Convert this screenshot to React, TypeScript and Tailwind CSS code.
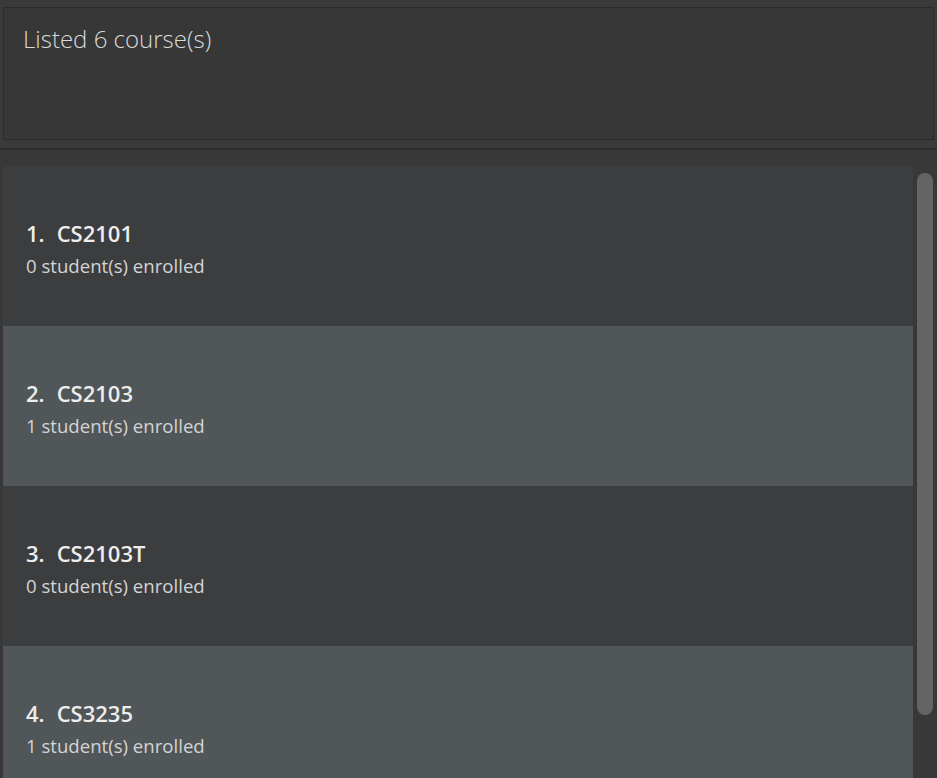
const courses = [
  { code: 'CS2101', students: 0 },
  { code: 'CS2103', students: 1 },
  { code: 'CS2103T', students: 0 },
  { code: 'CS3235', students: 1 },
]

function CourseCard({ index, code, students }: { index: number; code: string; students: number }) {
  const even = index % 2 === 1
  return (
    <div
      className={
        even
          ? 'h-[160px] shrink-0 bg-[#515658] pl-[23px] pt-[50px]'
          : 'h-[160px] shrink-0 bg-[#3c3d3f] pl-[23px] pt-[50px]'
      }
    >
      <div className="text-[22px] font-semibold leading-[34px] text-[#ededed]">
        <span className="mr-[12px]">{index + 1}.</span>
        {code}
      </div>
      <div className="mt-[2px] text-[18.6px] leading-[27px] text-[#d4d4d4]">{students} student(s) enrolled</div>
    </div>
  )
}

export default function App() {
  return (
    <div className="h-[778px] w-[937px] overflow-hidden bg-[#383838] font-['Open_Sans',sans-serif]">
      <div className="bg-[#3a3a3a] px-[3px] pt-[7px] pb-[8px]">
        <div className="h-[133px] border border-[#2b2b2b] bg-[#373737] px-[19px] pt-[15px]">
          <div className="text-[24px] font-light leading-[32px] text-[#dadada]">Listed 6 course(s)</div>
        </div>
      </div>
      <div className="h-[2px] bg-[#2d2d2d]" />
      <div className="flex gap-[4px] pl-[3px] pt-[16px]">
        <div className="flex h-[612px] w-[910px] flex-col overflow-hidden">
          {courses.map((c, i) => (
            <CourseCard key={c.code} index={i} code={c.code} students={c.students} />
          ))}
        </div>
        <div className="mt-[7px] h-[542px] w-[16px] rounded-full bg-[#646464]" />
      </div>
    </div>
  )
}
